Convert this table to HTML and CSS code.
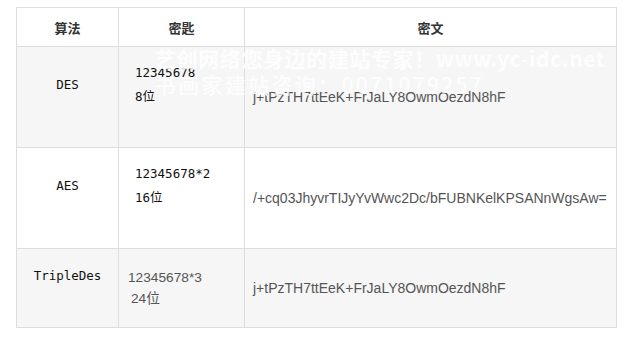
FILE: index.html
```html
<!DOCTYPE html>
<html>
<head>
<meta charset="utf-8">
<link rel="stylesheet" href="styles.css">
</head>
<body>
<div class="wrap">
  <table class="tbl">
    <colgroup>
      <col class="c1"><col class="c2"><col class="c3">
    </colgroup>
    <thead>
      <tr class="head"><th>算法</th><th>密匙</th><th>密文</th></tr>
    </thead>
    <tbody>
      <tr class="r1 alt">
        <td class="algo"><p class="mono">DES</p></td>
        <td class="key"><p class="mono">12345678<br>8位</p></td>
        <td class="cipher">j+tPzTH7ttEeK+FrJaLY8OwmOezdN8hF</td>
      </tr>
      <tr class="r2">
        <td class="algo"><p class="mono">AES</p></td>
        <td class="key"><p class="mono">12345678*2<br>16位</p></td>
        <td class="cipher">/+cq03JhyvrTIJyYvWwc2Dc/bFUBNKelKPSANnWgsAw=</td>
      </tr>
      <tr class="r3 alt">
        <td class="algo"><p class="mono">TripleDes</p></td>
        <td class="key3"><span class="k3a">12345678*3</span><br><span class="k3b">24位</span></td>
        <td class="cipher">j+tPzTH7ttEeK+FrJaLY8OwmOezdN8hF</td>
      </tr>
    </tbody>
  </table>
  <div class="watermark">
    <div class="wm1">艺创网络您身边的建站专家！www.yc-idc.net</div>
    <div class="wm2">书画家建站咨询：0071079257</div>
  </div>
</div>
</body>
</html>
```

FILE: styles.css
```css
html, body {
  margin: 0;
  padding: 0;
  background: #fff;
}
body {
  font-family: "Liberation Sans", Arial, "Noto Sans CJK SC", sans-serif;
  color: #333;
}
.wrap {
  position: relative;
  padding: 7px 0 0 16px;
  width: 600px;
}
.tbl {
  border-collapse: collapse;
  width: 600px;
  table-layout: fixed;
}
.c1 { width: 102px; }
.c2 { width: 126px; }
.c3 { width: 372px; }
.tbl th, .tbl td {
  border: 1px solid #dddddd;
  vertical-align: middle;
  padding: 0;
}
.tbl th {
  font-family: "Noto Sans CJK SC", sans-serif;
  font-weight: bold;
  font-size: 13px;
  color: #333;
  text-align: center;
  height: 38px;
}
.alt td { background: #f6f6f6; }
.r1 td, .r2 td { height: 100px; }
.r3 td { height: 78px; }
.mono {
  font-family: "DejaVu Sans Mono", "Noto Sans CJK SC", monospace;
  font-size: 12.5px;
  line-height: 24px;
  color: #111;
  margin: 0 0 24px 0;
}
.algo { text-align: center; }
.key { padding-left: 16px !important; }
.key3 {
  padding-left: 9px !important;
  font-family: "Liberation Sans", Arial, "Noto Sans CJK SC", sans-serif;
  font-size: 13.7px;
  line-height: 21px;
  color: #555;
}
.k3b { padding-left: 3px; }
.cipher {
  padding-left: 8px !important;
  font-family: "Liberation Sans", Arial, sans-serif;
  font-size: 14px;
  color: #555;
}
.watermark {
  position: absolute;
  left: 155px;
  top: 45px;
  font-family: "Noto Sans CJK SC", sans-serif;
  font-weight: bold;
  font-size: 21px;
  line-height: 26px;
  color: rgba(255, 255, 255, 0.85);
  white-space: nowrap;
}
.wm1 { letter-spacing: 0.6px; }
.wm2 { letter-spacing: 2.3px; font-weight: 500; }
```
